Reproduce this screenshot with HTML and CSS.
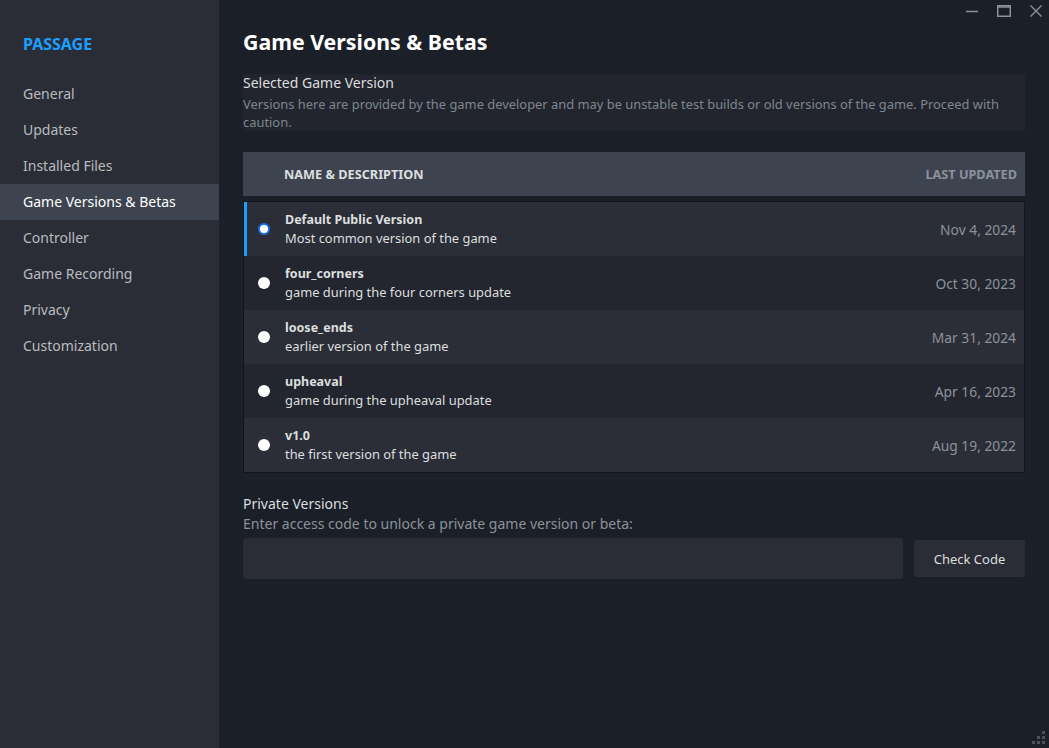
FILE: index.html
```html
<!DOCTYPE html>
<html lang="en">
<head>
    <meta charset="UTF-8">
    <meta name="viewport" content="width=device-width, initial-scale=1.0">
    <title>Properties - Passage</title>
    <link rel="stylesheet" href="styles.css">
</head>
<body>
    <div class="sidebar">
        <div class="app-name">PASSAGE</div>
        <div class="nav-item">General</div>
        <div class="nav-item">Updates</div>
        <div class="nav-item">Installed Files</div>
        <div class="nav-item active">Game Versions &amp; Betas</div>
        <div class="nav-item">Controller</div>
        <div class="nav-item">Game Recording</div>
        <div class="nav-item">Privacy</div>
        <div class="nav-item">Customization</div>
    </div>

    <div class="main">
        <div class="window-controls">
            <svg width="14" height="14" viewBox="0 0 14 14"><line x1="1" y1="7.5" x2="13" y2="7.5" stroke="#8b929a" stroke-width="1.5"/></svg>
            <svg width="14" height="14" viewBox="0 0 14 14"><rect x="0.75" y="1.75" width="12.5" height="10.5" fill="none" stroke="#8b929a" stroke-width="1.5"/><line x1="0.75" y1="3" x2="13.25" y2="3" stroke="#8b929a" stroke-width="1.5"/></svg>
            <svg width="14" height="14" viewBox="0 0 14 14"><path d="M1.5 1.5 L12.5 12.5 M12.5 1.5 L1.5 12.5" stroke="#8b929a" stroke-width="1.4"/></svg>
        </div>

        <h1>Game Versions &amp; Betas</h1>

        <div class="notice">
            <div class="notice-title">Selected Game Version</div>
            <div class="notice-text">Versions here are provided by the game developer and may be unstable test builds or old versions of the game. Proceed with caution.</div>
        </div>

        <div class="table-head">
            <span class="col-name">NAME &amp; DESCRIPTION</span>
            <span class="col-date">LAST UPDATED</span>
        </div>

        <div class="rows">
            <div class="row selected">
                <span class="radio checked"></span>
                <div class="info">
                    <div class="name">Default Public Version</div>
                    <div class="desc">Most common version of the game</div>
                </div>
                <div class="date">Nov 4, 2024</div>
            </div>
            <div class="row">
                <span class="radio"></span>
                <div class="info">
                    <div class="name">four_corners</div>
                    <div class="desc">game during the four corners update</div>
                </div>
                <div class="date">Oct 30, 2023</div>
            </div>
            <div class="row">
                <span class="radio"></span>
                <div class="info">
                    <div class="name">loose_ends</div>
                    <div class="desc">earlier version of the game</div>
                </div>
                <div class="date">Mar 31, 2024</div>
            </div>
            <div class="row">
                <span class="radio"></span>
                <div class="info">
                    <div class="name">upheaval</div>
                    <div class="desc">game during the upheaval update</div>
                </div>
                <div class="date">Apr 16, 2023</div>
            </div>
            <div class="row">
                <span class="radio"></span>
                <div class="info">
                    <div class="name">v1.0</div>
                    <div class="desc">the first version of the game</div>
                </div>
                <div class="date">Aug 19, 2022</div>
            </div>
        </div>

        <div class="private">
            <div class="private-title">Private Versions</div>
            <div class="private-text">Enter access code to unlock a private game version or beta:</div>
            <div class="code-row">
                <input type="text" class="code-input">
                <button class="check-btn">Check Code</button>
            </div>
        </div>

        <svg class="grip" width="14" height="14" viewBox="0 0 14 14" fill="#4b525c">
            <rect x="10" y="0" width="3" height="3"/>
            <rect x="5" y="5" width="3" height="3"/>
            <rect x="10" y="5" width="3" height="3"/>
            <rect x="0" y="10" width="3" height="3"/>
            <rect x="5" y="10" width="3" height="3"/>
            <rect x="10" y="10" width="3" height="3"/>
        </svg>
    </div>
</body>
</html>
```

FILE: styles.css
```css
* {
    box-sizing: border-box;
}
body {
    font-family: "Noto Sans", "Open Sans", sans-serif;
    margin: 0;
    padding: 0;
    display: flex;
    height: 100vh;
    overflow: hidden;
    background-color: #1b1f27;
    color: #dcdedf;
}
.sidebar {
    width: 219px;
    flex-shrink: 0;
    background-color: #2a2d35;
    padding-top: 32px;
}
.app-name {
    color: #1a9fff;
    font-weight: bold;
    font-size: 16px;
    line-height: 24px;
    padding-left: 23px;
    margin-bottom: 20px;
}
.nav-item {
    height: 36px;
    line-height: 36px;
    padding-left: 23px;
    font-size: 14px;
    color: #b8bcbf;
}
.nav-item.active {
    background-color: #3d4450;
    color: #ffffff;
}
.main {
    flex: 1;
    position: relative;
    padding: 28px 24px 0 24px;
}
.window-controls {
    position: absolute;
    top: 4px;
    right: 6px;
    display: flex;
    gap: 18px;
}
h1 {
    margin: 0 0 18px 0;
    font-size: 21.3px;
    line-height: 28px;
    font-weight: bold;
    color: #ffffff;
}
.notice {
    background-color: #22252d;
    margin-bottom: 21px;
}
.notice-title {
    font-size: 14px;
    line-height: 18px;
    margin-bottom: 3px;
}
.notice-text {
    font-size: 12.9px;
    line-height: 18px;
    color: #7e858d;
}
.table-head {
    display: flex;
    justify-content: space-between;
    align-items: center;
    height: 44px;
    background-color: #3d4450;
    font-size: 12.7px;
    font-weight: bold;
    margin-bottom: 5px;
}
.col-name {
    padding-left: 41px;
    color: #dcdedf;
}
.col-date {
    padding-right: 8px;
    color: #8b929a;
}
.rows {
    border: 1px solid #13151a;
}
.row {
    display: flex;
    align-items: center;
    height: 54px;
    background-color: #2b2e37;
    border-left: 3px solid transparent;
}
.row:nth-child(even) {
    background-color: #23262e;
}
.row.selected {
    border-left-color: #1a9fff;
}
.radio {
    width: 12px;
    height: 12px;
    border-radius: 50%;
    background-color: #ffffff;
    margin-left: 11px;
    margin-right: 15px;
    flex-shrink: 0;
}
.radio.checked {
    background-color: #ffffff;
    border: 2px solid #1a73e8;
}
.info {
    flex: 1;
}
.name {
    font-size: 12.5px;
    font-weight: bold;
    line-height: 19px;
    color: #dcdedf;
}
.desc {
    font-size: 12.9px;
    line-height: 19px;
    color: #dcdedf;
}
.date {
    font-size: 13.8px;
    color: #8b929a;
    padding-right: 8px;
}
.private {
    margin-top: 21px;
}
.private-title {
    font-size: 14px;
    line-height: 20px;
}
.private-text {
    font-size: 14px;
    line-height: 20px;
    color: #8b929a;
    margin-bottom: 4px;
}
.code-row {
    display: flex;
    align-items: center;
    gap: 11px;
}
.code-input {
    flex: 1;
    height: 41px;
    background-color: #2a2d35;
    border: none;
    border-radius: 3px;
    outline: none;
}
.check-btn {
    width: 111px;
    height: 37px;
    background-color: #2a2d35;
    border: none;
    border-radius: 2px;
    color: #dcdedf;
    font-family: "Noto Sans", "Open Sans", sans-serif;
    font-size: 13px;
}
.grip {
    position: absolute;
    right: 3px;
    bottom: 3px;
}
```
